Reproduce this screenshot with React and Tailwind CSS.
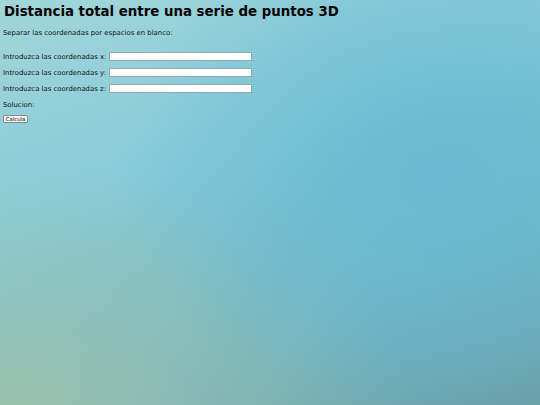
import React from 'react';

export default function App() {
  const rows = ['x', 'y', 'z'];

  return (
    <div
      className="w-[540px] h-[405px] overflow-hidden text-[#111]"
      style={{
        fontFamily: '"DejaVu Sans", Verdana, sans-serif',
        background:
          'radial-gradient(ellipse 320px 260px at 440px 170px, rgba(100,185,210,0.9), rgba(100,185,210,0) 100%), radial-gradient(ellipse 420px 260px at 0px 420px, rgba(160,196,170,0.9), rgba(160,196,170,0) 100%), linear-gradient(160deg, #a2d6da 0%, #86cad8 40%, #72b2c0 75%, #6a9ea6 100%)',
      }}
    >
      <div className="px-[3px] pt-[4px]">
        <h1 className="text-[13.35px] font-bold leading-[16px] m-0 pl-[1px] text-black">
          Distancia total entre una serie de puntos 3D
        </h1>
        <p className="text-[6.9px] leading-[10px] mt-[8px]">
          Separar las coordenadas por espacios en blanco:
        </p>
        <div className="mt-[13.5px] flex flex-col gap-[6px]">
          {rows.map((c) => (
            <div key={c} className="flex items-center h-[10px]">
              <span className="text-[6.9px] leading-[10px]">Introduzca las coordenadas {c}:</span>
              <input
                type="text"
                className="ml-[3px] w-[143px] h-[8.5px] bg-white border border-[#8fa9ad] outline-none"
              />
            </div>
          ))}
        </div>
        <p className="text-[6.9px] leading-[10px] mt-[6px]">Solucion:</p>
        <button className="mt-[5.5px] w-[25px] h-[8px] flex items-center justify-center text-[5.3px] leading-[6px] bg-[#f2f2f2] border border-[#8a8a8a] rounded-[1px]">
          Calcula
        </button>
      </div>
    </div>
  );
}
